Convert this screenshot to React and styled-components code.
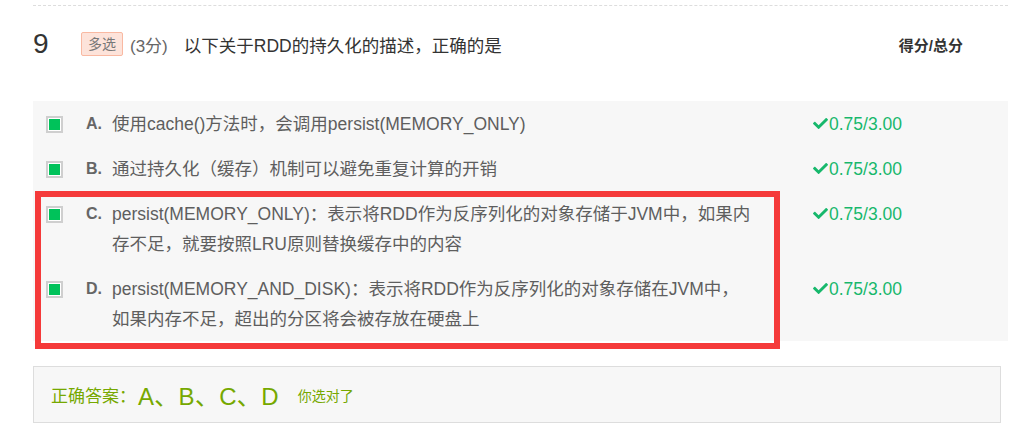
import React from "react";
import styled, { createGlobalStyle } from "styled-components";
import { FaCheck } from "react-icons/fa";

const GlobalStyle = createGlobalStyle`
  body {
    margin: 0;
    background: #fff;
    font-family: "Liberation Sans", "Noto Sans CJK SC", sans-serif;
  }
`;

const Page = styled.div`
  width: 975px;
  padding: 5px 0 0 33px;
`;

const Divider = styled.div`
  border-top: 1px dashed #ddd;
`;

const Header = styled.div`
  display: flex;
  align-items: center;
  height: 76px;
  margin-bottom: 19px;
  padding-right: 45px;
`;

const Number = styled.span`
  font-size: 28px;
  color: #333;
  width: 48px;
`;

const Tag = styled.span`
  display: inline-block;
  height: 22px;
  line-height: 22px;
  padding: 0 6px;
  font-size: 14px;
  color: #777;
  background: #fde3da;
  border: 1px solid #f9b9a2;
  border-radius: 2px;
`;

const Points = styled.span`
  margin-left: 7px;
  font-size: 17px;
  color: #666;
`;

const Question = styled.span`
  margin-left: 16px;
  font-size: 17.5px;
  color: #333;
  flex: 1;
`;

const ScoreHead = styled.span`
  font-size: 15px;
  font-weight: bold;
  color: #333;
`;

const Options = styled.div`
  background: #f7f7f7;
`;

const Group = styled.div`
  position: relative;
`;

const Highlight = styled.div`
  position: absolute;
  top: 0;
  left: 2px;
  width: 745px;
  bottom: -8px;
  box-sizing: border-box;
  border: 6px solid #f53a3a;
  pointer-events: none;
`;

const Row = styled.div`
  display: flex;
  align-items: flex-start;
  padding: 7.5px 0 7.5px 13px;
  line-height: 30px;
  font-size: 17.5px;
`;

const Check = styled.span`
  flex: 0 0 auto;
  box-sizing: border-box;
  width: 17px;
  height: 17px;
  margin-top: 7px;
  border: 2px solid #cfcfcf;
  padding: 1px;
  background: #fff;

  &::after {
    content: "";
    display: block;
    width: 100%;
    height: 100%;
    background: #00c25a;
  }
`;

const Letter = styled.span`
  width: 26px;
  margin-left: 23px;
  font-size: 16px;
  font-weight: bold;
  color: #666;
`;

const Text = styled.div`
  width: 660px;
  color: #5e5e5e;
`;

const Line = styled.div`
  white-space: nowrap;
`;

const Score = styled.div`
  display: flex;
  align-items: center;
  margin-left: 40px;
  color: #17b86c;
  height: 30px;

  svg {
    width: 17px;
    height: 15px;
  }
`;

const Answer = styled.div`
  display: flex;
  align-items: center;
  width: 949px;
  height: 55px;
  margin-top: 25px;
  padding-left: 17px;
  background: #f7f7f7;
  border: 1px solid #ddd;
  color: #76a800;
`;

const AnswerLabel = styled.span`
  font-size: 17px;
`;

const AnswerKeys = styled.span`
  font-size: 24px;
  margin-left: 2px;
  letter-spacing: 0.3px;
`;

const AnswerNote = styled.span`
  font-size: 14px;
  margin-left: 19px;
`;

const options = [
  { key: "A", lines: ["使用cache()方法时，会调用persist(MEMORY_ONLY)"] },
  { key: "B", lines: ["通过持久化（缓存）机制可以避免重复计算的开销"] },
  {
    key: "C",
    lines: [
      "persist(MEMORY_ONLY)：表示将RDD作为反序列化的对象存储于JVM中，如果内",
      "存不足，就要按照LRU原则替换缓存中的内容",
    ],
  },
  {
    key: "D",
    lines: [
      "persist(MEMORY_AND_DISK)：表示将RDD作为反序列化的对象存储在JVM中，",
      "如果内存不足，超出的分区将会被存放在硬盘上",
    ],
  },
];

const Option = ({ item }) => (
  <Row>
    <Check />
    <Letter>{item.key}.</Letter>
    <Text>
      {item.lines.map((l) => (
        <Line key={l}>{l}</Line>
      ))}
    </Text>
    <Score>
      <FaCheck />
      0.75/3.00
    </Score>
  </Row>
);

const App = () => {
  return (
    <Page>
      <GlobalStyle />
      <Divider />
      <Header>
        <Number>9</Number>
        <Tag>多选</Tag>
        <Points>(3分)</Points>
        <Question>以下关于RDD的持久化的描述，正确的是</Question>
        <ScoreHead>得分/总分</ScoreHead>
      </Header>
      <Options>
        {options.slice(0, 2).map((o) => (
          <Option key={o.key} item={o} />
        ))}
        <Group>
          {options.slice(2).map((o) => (
            <Option key={o.key} item={o} />
          ))}
          <Highlight />
        </Group>
      </Options>
      <Answer>
        <AnswerLabel>正确答案：</AnswerLabel>
        <AnswerKeys>A、B、C、D</AnswerKeys>
        <AnswerNote>你选对了</AnswerNote>
      </Answer>
    </Page>
  );
};

export default App;
